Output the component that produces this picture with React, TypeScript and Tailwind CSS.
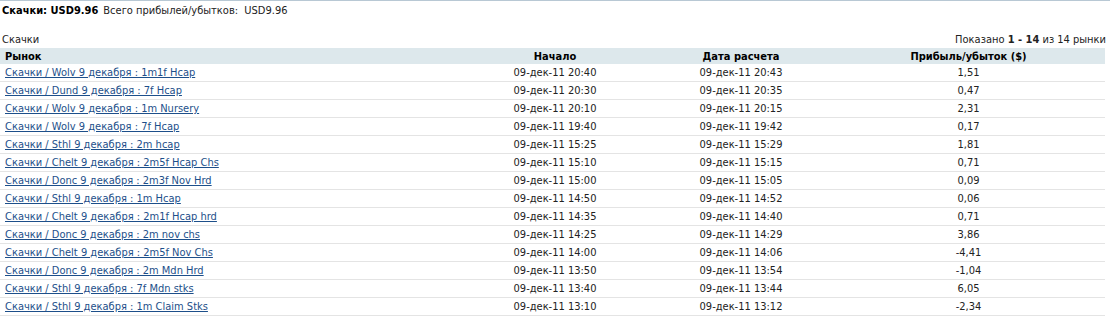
import React from "react";

const rows: [string, string, string, string][] = [
  ["Скачки / Wolv 9 декабря : 1m1f Hcap", "09-дек-11 20:40", "09-дек-11 20:43", "1,51"],
  ["Скачки / Dund 9 декабря : 7f Hcap", "09-дек-11 20:30", "09-дек-11 20:35", "0,47"],
  ["Скачки / Wolv 9 декабря : 1m Nursery", "09-дек-11 20:10", "09-дек-11 20:15", "2,31"],
  ["Скачки / Wolv 9 декабря : 7f Hcap", "09-дек-11 19:40", "09-дек-11 19:42", "0,17"],
  ["Скачки / Sthl 9 декабря : 2m hcap", "09-дек-11 15:25", "09-дек-11 15:29", "1,81"],
  ["Скачки / Chelt 9 декабря : 2m5f Hcap Chs", "09-дек-11 15:10", "09-дек-11 15:15", "0,71"],
  ["Скачки / Donc 9 декабря : 2m3f Nov Hrd", "09-дек-11 15:00", "09-дек-11 15:05", "0,09"],
  ["Скачки / Sthl 9 декабря : 1m Hcap", "09-дек-11 14:50", "09-дек-11 14:52", "0,06"],
  ["Скачки / Chelt 9 декабря : 2m1f Hcap hrd", "09-дек-11 14:35", "09-дек-11 14:40", "0,71"],
  ["Скачки / Donc 9 декабря : 2m nov chs", "09-дек-11 14:25", "09-дек-11 14:29", "3,86"],
  ["Скачки / Chelt 9 декабря : 2m5f Nov Chs", "09-дек-11 14:00", "09-дек-11 14:06", "-4,41"],
  ["Скачки / Donc 9 декабря : 2m Mdn Hrd", "09-дек-11 13:50", "09-дек-11 13:54", "-1,04"],
  ["Скачки / Sthl 9 декабря : 7f Mdn stks", "09-дек-11 13:40", "09-дек-11 13:44", "6,05"],
  ["Скачки / Sthl 9 декабря : 1m Claim Stks", "09-дек-11 13:10", "09-дек-11 13:12", "-2,34"],
];

export default function App() {
  return (
    <div className="w-[1110px] h-[316px] overflow-hidden bg-white text-[11px] text-[#222] font-['DejaVu_Sans_Condensed','DejaVu_Sans',sans-serif] [font-stretch:condensed] leading-none">
      <div className="border-t border-[#b8c8d4] h-[20px] flex items-center pl-[2px] gap-[5px]">
        <span className="font-bold text-black">Скачки: USD9.96</span>
        <span>Всего прибылей/убытков:&nbsp; USD9.96</span>
      </div>
      <div className="h-[28px] flex items-end justify-between pl-[2px] pr-[4px] pb-[3px]">
        <span>Скачки</span>
        <span>
          Показано <b>1 - 14</b> из 14 рынки
        </span>
      </div>
      <div className="w-[1105px]">
        <div className="grid grid-cols-[460px_190px_182px_273px] h-[16px] items-center bg-[#dde8ec] font-bold text-black">
          <div className="pl-[5px]">Рынок</div>
          <div className="text-center">Начало</div>
          <div className="text-center">Дата расчета</div>
          <div className="text-center">Прибыль/убыток ($)</div>
        </div>
        {rows.map((r, i) => (
          <div
            key={i}
            className="grid grid-cols-[460px_190px_182px_273px] h-[18px] items-center border-b border-[#e4e4e4]"
          >
            <div className="pl-[5px]">
              <a href="#" className="text-[#1d4f8a] underline">
                {r[0]}
              </a>
            </div>
            <div className="text-center">{r[1]}</div>
            <div className="text-center">{r[2]}</div>
            <div className="text-center">{r[3]}</div>
          </div>
        ))}
      </div>
    </div>
  );
}
